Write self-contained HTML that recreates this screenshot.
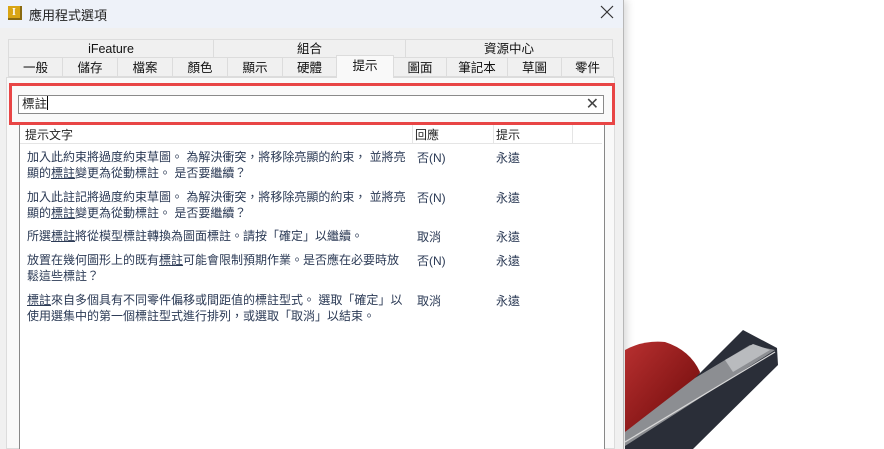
<!DOCTYPE html>
<html><head><meta charset="utf-8"><style>
*{margin:0;padding:0;box-sizing:border-box}
body{width:884px;height:449px;overflow:hidden;background:#fff;position:relative;font-family:"Liberation Sans","Noto Sans CJK TC",sans-serif;font-size:12px;color:#222}
.dlg{position:absolute;left:0;top:0;width:624px;height:449px;background:#f0f0f0;border-right:1px solid #b8b8b8;box-shadow:3px 0 8px rgba(0,0,0,.15)}
.title{height:28px;background:#eef2f9;position:relative}
.title .ic{position:absolute;left:8px;top:6px;width:14px;height:14px;background:#d9a514;border-right:2px solid #8a6a10;border-bottom:2px solid #8a6a10;color:#fff;font:bold 10px "Liberation Serif",serif;text-align:center;line-height:13px}
.title .t{position:absolute;left:29px;top:5px;font-size:13px;color:#222}
.title svg{position:absolute;left:600px;top:5px}
.tab{position:absolute;border:1px solid #dcdcdc;background:#f0f0f0;text-align:center;font-size:12.5px;color:#111}
.r1{top:39px;height:19px;line-height:18px}
.r2{top:57px;height:20px;line-height:21px}
.sel{background:#f9f9f9;top:55px;height:23px;border-bottom:none;z-index:2}
.pane{position:absolute;left:6px;top:77px;width:609px;height:372px;background:#f9f9f9;border:1px solid #dcdcdc}
.red{position:absolute;left:9px;top:83px;width:606px;height:42px;border:3px solid #e84545;z-index:3}
.inp{position:absolute;left:18px;top:95px;width:586px;height:19px;background:#fff;border:1px solid #8a8a8a;z-index:4}
.inp .v{position:absolute;left:3px;top:0;font-size:12.5px;line-height:17px}
.inp .v:after{content:"";display:inline-block;width:1px;height:14px;background:#000;vertical-align:-2px}
.inp .c{position:absolute;right:4px;top:-2px;font-size:16px;color:#444}
.list{position:absolute;left:19px;top:125px;width:586px;height:324px;background:#fff;border-left:1px solid #888;border-right:1px solid #888}
.hd{position:absolute;top:0;height:19px;border-bottom:1px solid #e5e5e5;width:582px;left:0}
.hd span{position:absolute;top:1px;font-size:12px}
.hd i{position:absolute;top:0;width:1px;height:19px;background:#e5e5e5}
.row{position:absolute;left:7px;color:#2b3a55;font-size:12px;line-height:16px}
.c2,.c3{position:absolute;color:#2b3a55;font-size:12px}
.c2{left:397px}.c3{left:476px}
u{text-decoration:underline}
</style></head><body>
<div class="dlg">
<div class="title"><div class="ic">I</div><div class="t">應用程式選項</div><svg width="14" height="14"><path d="M1 1L13 13M13 1L1 13" stroke="#333" stroke-width="1.2"/></svg></div>
<div class="tab r1" style="left:8px;width:206px">iFeature</div>
<div class="tab r1" style="left:213px;width:193px">組合</div>
<div class="tab r1" style="left:405px;width:208px">資源中心</div>
<div class="tab r2" style="left:8px;width:55px">一般</div>
<div class="tab r2" style="left:62px;width:56px">儲存</div>
<div class="tab r2" style="left:117px;width:56px">檔案</div>
<div class="tab r2" style="left:172px;width:56px">顏色</div>
<div class="tab r2" style="left:227px;width:56px">顯示</div>
<div class="tab r2" style="left:282px;width:55px">硬體</div>
<div class="tab r2 sel" style="left:336px;width:58px">提示</div>
<div class="tab r2" style="left:393px;width:54px">圖面</div>
<div class="tab r2" style="left:446px;width:62px">筆記本</div>
<div class="tab r2" style="left:507px;width:55px">草圖</div>
<div class="tab r2" style="left:561px;width:53px">零件</div>
<div class="pane"></div>
<div class="red"></div>
<div class="inp"><span class="v">標註</span><span class="c">✕</span></div>
<div class="list">
<div class="hd"><span style="left:5px">提示文字</span><i style="left:392px"></i><span style="left:395px">回應</span><i style="left:473px"></i><span style="left:476px">提示</span><i style="left:552px"></i></div>
<div class="row" style="top:24px">加入此約束將過度約束草圖。 為解決衝突，將移除亮顯的約束， 並將亮<br>顯的<u>標註</u>變更為從動標註。 是否要繼續？</div>
<div class="c2" style="top:24px">否(N)</div><div class="c3" style="top:24px">永遠</div>
<div class="row" style="top:64px">加入此註記將過度約束草圖。 為解決衝突，將移除亮顯的約束， 並將亮<br>顯的<u>標註</u>變更為從動標註。 是否要繼續？</div>
<div class="c2" style="top:64px">否(N)</div><div class="c3" style="top:64px">永遠</div>
<div class="row" style="top:103px">所選<u>標註</u>將從模型標註轉換為圖面標註。請按「確定」以繼續。</div>
<div class="c2" style="top:103px">取消</div><div class="c3" style="top:103px">永遠</div>
<div class="row" style="top:127px">放置在幾何圖形上的既有<u>標註</u>可能會限制預期作業。是否應在必要時放<br>鬆這些標註？</div>
<div class="c2" style="top:127px">否(N)</div><div class="c3" style="top:127px">永遠</div>
<div class="row" style="top:167px"><u>標註</u>來自多個具有不同零件偏移或間距值的標註型式。 選取「確定」以<br>使用選集中的第一個標註型式進行排列，或選取「取消」以結束。</div>
<div class="c2" style="top:167px">取消</div><div class="c3" style="top:167px">永遠</div>
</div>
</div>
<svg style="position:absolute;left:625px;top:320px" width="200" height="129">
<defs><linearGradient id="rg" x1="0" y1="0" x2="1" y2="1"><stop offset="0" stop-color="#b83030"/><stop offset="1" stop-color="#6a0808"/></linearGradient></defs>
<path d="M0 30 Q18 20 40 22 Q65 30 75 52 L68 80 L0 112 Z" fill="url(#rg)"/>
<path d="M0 120 Q20 114 45 122 L45 129 L0 129Z" fill="#a82222"/>
<path d="M60 68 L118 10 L152 28 L153 45 L68 129 L0 129 L0 115 Z" fill="#2a2e38"/>
<path d="M70 58 L125 25 L150 30 L100 62 L0 126 L0 112 Z" fill="#8c8e92"/>
<path d="M100 40 L128 24 L145 30 L108 52 Z" fill="#b9bbbe"/>
<path d="M0 122 L100 62 L150 32" stroke="#d8d8d8" stroke-width="1.2" fill="none"/>
</svg>
</body></html>
